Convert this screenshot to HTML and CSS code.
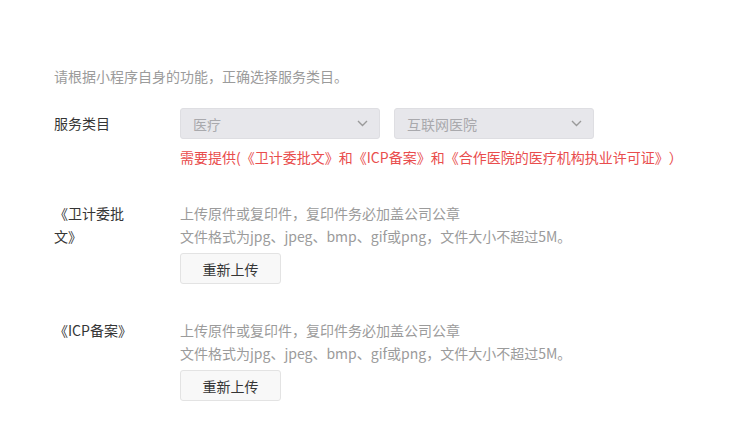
FILE: index.html
```html
<!DOCTYPE html>
<html lang="zh-CN">
<head>
<meta charset="utf-8">
<link rel="stylesheet" href="styles.css">
</head>
<body>
<div class="page">
  <p class="intro">请根据小程序自身的功能，正确选择服务类目。</p>

  <div class="row row-category">
    <div class="label label-mid">服务类目</div>
    <div class="content">
      <div class="selects">
        <div class="select">
          <span class="select-text">医疗</span>
          <svg class="chev" width="11" height="7" viewBox="0 0 11 7"><path d="M1 1 L5.5 5.5 L10 1" fill="none" stroke="#9a9a9a" stroke-width="1.4"/></svg>
        </div>
        <div class="select">
          <span class="select-text">互联网医院</span>
          <svg class="chev" width="11" height="7" viewBox="0 0 11 7"><path d="M1 1 L5.5 5.5 L10 1" fill="none" stroke="#9a9a9a" stroke-width="1.4"/></svg>
        </div>
      </div>
      <p class="warn">需要提供(《卫计委批文》和《ICP备案》和《合作医院的医疗机构执业许可证》）</p>
    </div>
  </div>

  <div class="row row-upload">
    <div class="label"><span class="label-text">《卫计委批文》</span></div>
    <div class="content">
      <p class="desc">上传原件或复印件，复印件务必加盖公司公章</p>
      <p class="desc">文件格式为jpg、jpeg、bmp、gif或png，文件大小不超过5M。</p>
      <button class="btn">重新上传</button>
    </div>
  </div>

  <div class="row row-upload">
    <div class="label"><span class="label-text">《ICP备案》</span></div>
    <div class="content">
      <p class="desc">上传原件或复印件，复印件务必加盖公司公章</p>
      <p class="desc">文件格式为jpg、jpeg、bmp、gif或png，文件大小不超过5M。</p>
      <button class="btn">重新上传</button>
    </div>
  </div>
</div>
</body>
</html>
```

FILE: styles.css
```css
* { box-sizing: border-box; }
html, body {
  margin: 0;
  padding: 0;
  background: #ffffff;
}
body {
  font-family: "Noto Sans CJK SC", "Noto Sans", sans-serif;
  font-size: 14px;
  color: #353535;
  text-spacing-trim: space-all;
}
.page {
  padding: 66px 0 0 54px;
}
p { margin: 0; }
.intro {
  line-height: 20px;
  color: #9b9b9b;
}
.row {
  display: flex;
}
.row-category {
  margin-top: 22px;
}
.label {
  width: 126px;
  flex: none;
  line-height: 23px;
  color: #353535;
}
.label-mid {
  line-height: 31px;
}
.label-text {
  display: block;
  width: 80px;
}
.content {
  display: flex;
  flex-direction: column;
  align-items: flex-start;
}
.selects {
  display: flex;
  gap: 14px;
}
.select {
  width: 200px;
  height: 31px;
  border: 1px solid #dedee2;
  border-radius: 3px;
  background: #e7e7eb;
  display: flex;
  align-items: center;
  justify-content: space-between;
  padding: 0 11px 0 12px;
}
.select-text {
  color: #a9a9ad;
  line-height: 20px;
}
.chev { display: block; }
.warn {
  margin-top: 8px;
  line-height: 20px;
  color: #e94d4d;
}
.row-upload {
  margin-top: 35px;
}
.desc {
  line-height: 23px;
  color: #9b9b9b;
}
.btn {
  margin-top: 5px;
  width: 101px;
  height: 31px;
  border: 1px solid #e3e3e3;
  border-radius: 3px;
  background: #f8f8f8;
  color: #353535;
  font-family: inherit;
  font-size: 14px;
  padding: 0;
}
```
